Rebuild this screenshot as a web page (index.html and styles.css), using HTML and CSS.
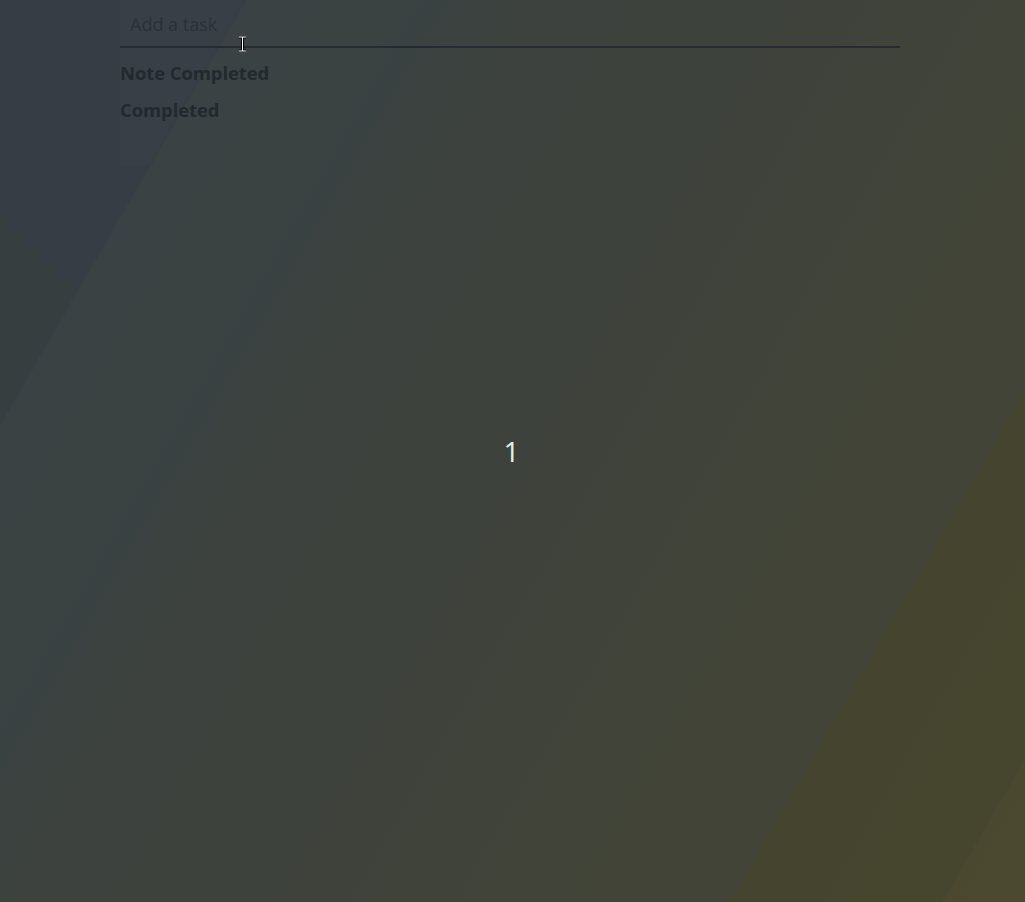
FILE: index.html
```html
<!DOCTYPE html>
<html lang="en">
<head>
<meta charset="utf-8">
<title>Todo</title>
<link rel="stylesheet" href="styles.css">
</head>
<body>
<div class="page">
  <section class="todo">
    <label class="field">
      <input class="task-input" type="text" aria-label="Add a task">
      <span class="hint">Add a task</span>
      <svg class="ibeam" width="9" height="16" viewBox="0 0 9 16" aria-hidden="true">
        <path d="M1 1h7M1 15h7M4.5 1v14" stroke="#000" stroke-width="3" fill="none"/>
        <path d="M1 1h7M1 15h7M4.5 1v14" stroke="#fff" stroke-width="1" fill="none"/>
      </svg>
    </label>
    <ul class="list">
      <li class="item">Note Completed</li>
      <li class="item">Completed</li>
    </ul>
  </section>
  <div class="counter">1</div>
</div>
</body>
</html>
```

FILE: styles.css
```css
html, body {
  margin: 0;
  height: 100%;
}
body {
  font-family: "Open Sans", "Noto Sans", sans-serif;
  background-color: #3e423e;
  background-image:
    linear-gradient(120deg, rgba(255,255,255,0.012) 55%, rgba(0,0,0,0) 55%),
    conic-gradient(from 210deg at 76px 76px, #373e40 0deg 105deg, rgba(0,0,0,0) 105deg),
    linear-gradient(120deg,
      #373d45 0%,
      #373d45 15.8%,
      #3a4243 16%,
      #3b4242 26%,
      #3a4142 28%,
      #3c423f 31%,
      #3e423c 50%,
      #414437 72%,
      #434438 80.8%,
      #45452f 81%,
      #46462f 94.6%,
      #4a4930 94.8%,
      #4b4a30 100%);
  background-size: 130px 165px, 76px 207px, 100% 100%;
  background-position: 120px 0, 0 215px, 0 0;
  background-repeat: no-repeat;
}
.page {
  display: grid;
  height: 100vh;
  overflow: hidden;
}
.page > * {
  grid-area: 1 / 1;
}
.todo {
  align-self: start;
  width: 780px;
  margin-left: 120px;
  padding-top: 2px;
}
.field {
  position: relative;
  display: grid;
}
.field > .task-input,
.field > .hint {
  grid-area: 1 / 1;
}
.task-input {
  display: block;
  box-sizing: border-box;
  width: 100%;
  height: 46px;
  padding: 0 10px;
  border: 0;
  border-bottom: 2px solid #252b31;
  background: transparent;
  font-family: "Open Sans", sans-serif;
  font-size: 18px;
  color: #2c3238;
  outline: none;
}
.hint {
  align-self: center;
  padding: 0 10px 2px;
  font-size: 18px;
  color: #2b3137;
  pointer-events: none;
}
.ibeam {
  position: absolute;
  left: 118px;
  top: 34px;
}
.list {
  list-style: none;
  margin: 0;
  padding: 0;
}
.item {
  font-weight: 700;
  font-size: 18.5px;
  line-height: 24px;
  color: #23292e;
  margin-top: 13px;
  letter-spacing: -0.1px;
}
.counter {
  place-self: center;
  font-family: "Open Sans", sans-serif;
  font-size: 28px;
  color: #e4f2e2;
  line-height: 1;
  margin-left: -2px;
}
```
